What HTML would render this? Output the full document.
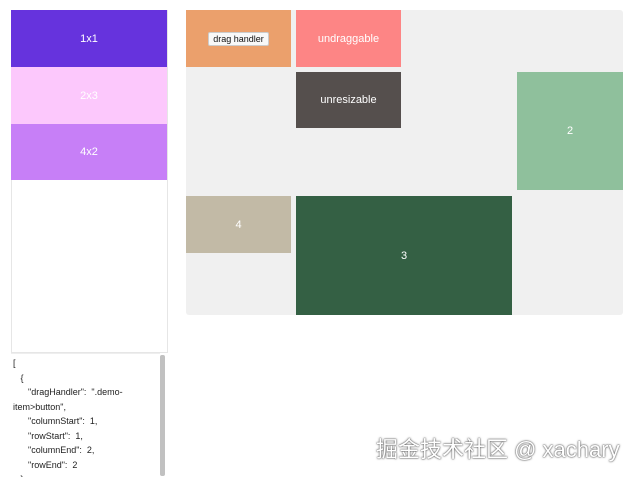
<!DOCTYPE html>
<html><head><meta charset="utf-8"><style>
body{margin:0;width:640px;height:476px;background:#fff;font-family:"Liberation Sans",sans-serif;position:relative;overflow:hidden}
.a{position:absolute;display:flex;align-items:center;justify-content:center;color:#fff;font-size:11px}
pre{margin:0;font-family:"Liberation Sans",sans-serif;font-size:9px;line-height:14.5px;color:#222}
</style></head><body>
<div style="position:absolute;left:11px;top:10px;width:155px;height:342px;border:1px solid #e6e6e6;border-top:none"></div>
<div class="a" style="left:11px;top:10px;width:156px;height:57px;background:#6633dd">1x1</div>
<div class="a" style="left:11px;top:67px;width:156px;height:57px;background:#fcc8fc">2x3</div>
<div class="a" style="left:11px;top:124px;width:156px;height:56px;background:#c77ff7">4x2</div>
<div style="position:absolute;left:11px;top:353px;width:149px;height:123px;border-top:1px solid #eee;overflow:hidden">
<pre style="padding:2px 0 0 2px">[
   {
      "dragHandler":  ".demo-
item>button",
      "columnStart":  1,
      "rowStart":  1,
      "columnEnd":  2,
      "rowEnd":  2
   },</pre></div>
<div style="position:absolute;left:160px;top:355px;width:5px;height:121px;background:#c1c1c1;border-radius:2px"></div>
<div style="position:absolute;left:186px;top:10px;width:437px;height:305px;background:#f0f0f0;border-radius:3px"></div>
<div class="a" style="left:186px;top:10px;width:105px;height:57px;background:#eba06c"><span style="background:#f8f8f8;color:#111;font-size:9px;padding:1px 4px;border:1px solid #ccc;border-radius:2px">drag handler</span></div>
<div class="a" style="left:296px;top:10px;width:105px;height:57px;background:#fd8585">undraggable</div>
<div class="a" style="left:296px;top:72px;width:105px;height:56px;background:#554f4d">unresizable</div>
<div class="a" style="left:517px;top:72px;width:106px;height:118px;background:#8fc09c">2</div>
<div class="a" style="left:186px;top:196px;width:105px;height:57px;background:#c2baa6">4</div>
<div class="a" style="left:296px;top:196px;width:216px;height:119px;background:#346044">3</div>
<div style="position:absolute;left:376px;top:432px;font-size:22px;color:#fff;text-shadow:0 0 2px #555,0 0 1px #333;font-family:'Liberation Sans','Noto Sans CJK SC',sans-serif;white-space:nowrap">掘金技术社区 @ xachary</div>
</body></html>
